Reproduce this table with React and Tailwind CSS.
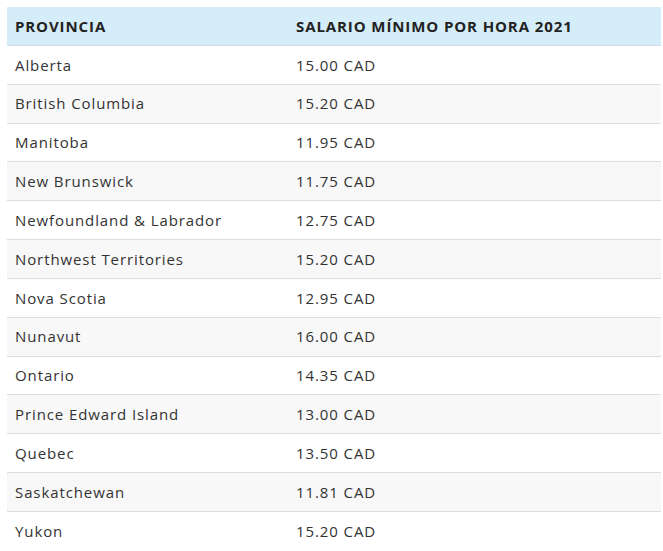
const rows = [
  ['Alberta', '15.00 CAD'],
  ['British Columbia', '15.20 CAD'],
  ['Manitoba', '11.95 CAD'],
  ['New Brunswick', '11.75 CAD'],
  ['Newfoundland & Labrador', '12.75 CAD'],
  ['Northwest Territories', '15.20 CAD'],
  ['Nova Scotia', '12.95 CAD'],
  ['Nunavut', '16.00 CAD'],
  ['Ontario', '14.35 CAD'],
  ['Prince Edward Island', '13.00 CAD'],
  ['Quebec', '13.50 CAD'],
  ['Saskatchewan', '11.81 CAD'],
  ['Yukon', '15.20 CAD'],
];

export default function App() {
  return (
    <div className="bg-white w-[663px] h-[551px] overflow-hidden pt-[7px] pl-[7px] pr-[2px]" style={{ fontFamily: '"Open Sans", sans-serif' }}>
      <div className="text-[15px] tracking-[0.9px] text-[#333]">
        <div className="grid grid-cols-[281px_1fr] h-[39px] items-center bg-[#d5edf8] border-b border-[#cfdde4] font-bold text-[#222]">
          <div className="pl-2">PROVINCIA</div>
          <div className="pl-2">SALARIO MÍNIMO POR HORA 2021</div>
        </div>
        {rows.map(([p, s], i) => (
          <div key={p} className={`grid grid-cols-[281px_1fr] h-[38.83px] items-center border-[#dddddd] ${i < rows.length - 1 ? 'border-b' : ''} ${i % 2 ? 'bg-[#f8f8f8]' : 'bg-white'}`}>
            <div className="pl-2">{p}</div>
            <div className="pl-2">{s}</div>
          </div>
        ))}
      </div>
    </div>
  );
}
